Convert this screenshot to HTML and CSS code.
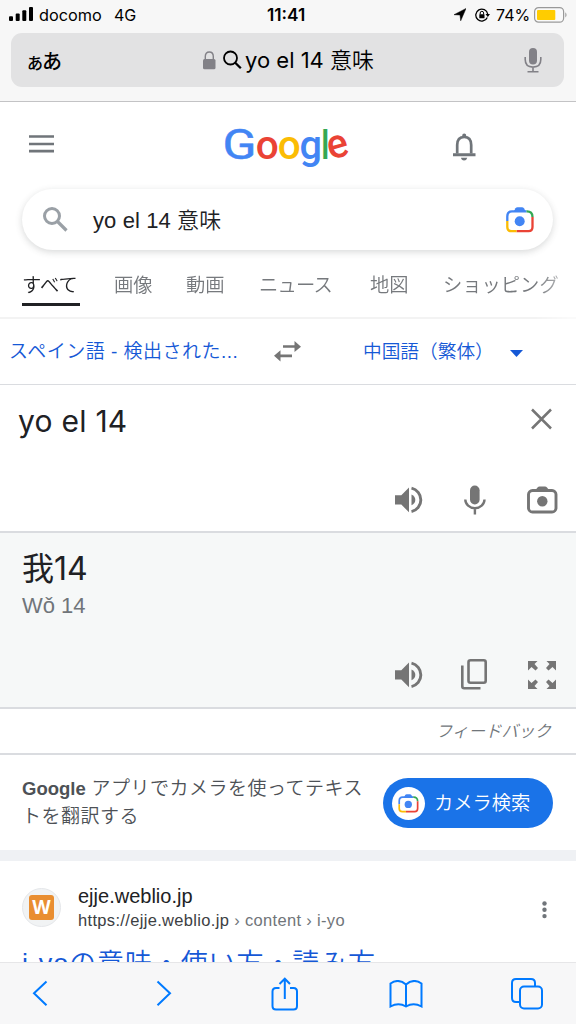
FILE: index.html
```html
<!DOCTYPE html>
<html lang="ja">
<head>
<meta charset="utf-8">
<title>yo el 14 意味</title>
<link rel="stylesheet" href="styles.css">
</head>
<body>
<svg class="defs" width="0" height="0">
  <symbol id="lens" viewBox="0 0 28 26">
    <path d="M8 4 9.500 1.200Q10.200.2 11.500 .2h4.500q1.300 0 1.900 1L19.500 4z" fill="#4285f4"/>
    <g fill="none" stroke-width="2.300">
      <path d="M1.300 14V9.500Q1.300 4.300 6 4.300H20.500" stroke="#4285f4"/>
      <path d="M20.500 4.300Q26.500 4 26.500 10" stroke="#34a853"/>
      <path d="M26.500 10V20Q26.500 24.200 22.500 24.200H10.500" stroke="#ea4335"/>
      <path d="M10.500 24.200H5.500Q1.300 24.200 1.300 20V14" stroke="#fbbc04"/>
    </g>
    <circle cx="13.700" cy="14.300" r="5" fill="#4285f4"/>
  </symbol>
  <symbol id="speaker" viewBox="0 0 28 28">
    <path d="M0 9.300H6.300L14 1.500V26.300L6.300 18.500H0z" fill="currentColor"/>
    <path d="M16.500 8.600Q20.300 10.400 20.300 14T16.500 19.200z" fill="currentColor"/>
    <path d="M16.500 2.200A12 12 0 0 1 16.500 25.600" fill="none" stroke="currentColor" stroke-width="2.900"/>
  </symbol>
  <symbol id="mic" viewBox="0 0 22 30">
    <rect x="6" y=".5" width="9.600" height="19" rx="4.800" fill="currentColor"/>
    <path d="M1.300 14.500a9.600 8.700 0 0 0 19.200 0M10.900 23v6.500" fill="none" stroke="currentColor" stroke-width="2.400"/>
  </symbol>
</svg>

<header class="browser">
  <div class="status">
    <svg class="signal" width="24" height="14" viewBox="0 0 24 14"><rect y="9.300" width="4" height="4.700" rx="1"/><rect x="6.700" y="6.500" width="4" height="7.500" rx="1"/><rect x="13.300" y="3.300" width="4" height="10.700" rx="1"/><rect x="20" width="4" height="14" rx="1"/></svg>
    <span class="carrier">docomo</span><span class="network">4G</span>
    <span class="time">11:41</span>
    <svg class="arrow" width="12" height="13" viewBox="0 0 12 13"><path d="M0 6.700 12 .5 6.700 12.800 6 7z" stroke="#000" stroke-width=".5"/></svg>
    <svg class="rotation" width="15" height="14" viewBox="0 0 15 14"><path d="M12.300 9.500A6 6 0 1 1 12.700 6" fill="none" stroke="#000" stroke-width="1.300"/><path d="M10.500 6h4.500l-2.200 3z"/><rect x="4.300" y="6.200" width="5.200" height="4" rx=".5"/><path d="M5.200 6.500V5q0-1.700 1.700-1.700T8.600 5v1.500" fill="none" stroke="#000"/></svg>
    <span class="percent">74%</span>
    <svg class="battery" width="34" height="16" viewBox="0 0 34 16"><rect x=".6" y=".6" width="29" height="14.600" rx="4" fill="#f9f9f9" stroke="#999" stroke-width="1.200"/><rect x="3" y="3" width="18.300" height="10" rx="1" fill="#fc0"/><path d="M31.300 5.300Q33.800 8 31.300 10.500z" fill="#999"/></svg>
  </div>
  <div class="address">
    <span class="text-size"><small>あ</small>あ</span>
    <svg class="lock" width="13" height="19" viewBox="0 0 13 19"><rect y="8" width="12.500" height="10.300" rx="1.500" fill="#828187"/><path d="M2.300 9V5.500q0-4.500 4-4.500t4 4.500V9" fill="none" stroke="#828187" stroke-width="1.400"/></svg>
    <svg class="glass" width="19" height="20" viewBox="0 0 19 20"><circle cx="7.500" cy="8" r="6.500" fill="none" stroke="#000" stroke-width="1.800"/><path d="m12 12.500 5.800 5.800" stroke="#000" stroke-width="2.300"/></svg>
    <span class="address-text">yo el 14 <span class="kanji">意味</span></span>
    <svg class="dictate" width="18" height="26" viewBox="0 0 18 26"><rect x="5" y="1" width="8" height="16.500" rx="4" fill="#828187"/><path d="M1.200 10v2.500q0 7.600 7.800 7.600t7.800-7.600V10M9 20v4.500M3.500 24.800h11" fill="none" stroke="#828187" stroke-width="1.600"/></svg>
  </div>
</header>

<div class="masthead">
  <svg class="menu" width="25" height="18" viewBox="0 0 25 18"><path d="M0 1.500h25M0 9h25M0 16.200h25" stroke="#70757a" stroke-width="2.700"/></svg>
  <svg class="logo" width="134" height="52" viewBox="-4 0 134 52" role="img" aria-label="Google">
    <g class="wordmark">
      <text class="capital" x="-1.500" y="40.500" fill="#4285f4" textLength="34" lengthAdjust="spacingAndGlyphs">G</text>
      <text x="31.700" y="40.500" fill="#ea4335" textLength="23" lengthAdjust="spacingAndGlyphs">o</text>
      <text x="53.700" y="40.500" fill="#fbbc04" textLength="23" lengthAdjust="spacingAndGlyphs">o</text>
      <text x="75.500" y="40.500" fill="#4285f4" textLength="22.500" lengthAdjust="spacingAndGlyphs">g</text>
      <text x="97" y="40.500" fill="#34a853" textLength="8.500" lengthAdjust="spacingAndGlyphs">l</text>
      <text x="103.500" y="39.500" fill="#ea4335" textLength="21" lengthAdjust="spacingAndGlyphs" transform="rotate(-16 114 30)">e</text>
    </g>
  </svg>
  <svg class="bell" width="23" height="28" viewBox="0 0 23 28"><path d="M4.200 20.500V12Q4.200 4 11.200 4t7 8v8.500" fill="none" stroke="#70757a" stroke-width="2.700"/><path d="M0 20.300h22.500v3H0zM9.200 4V2.500a2 2 0 0 1 4 0V4zM8 24.800h6.300q-.6 2.700-3.200 2.700T8 24.800z" fill="#70757a"/></svg>
</div>

<div class="search">
  <svg class="search-icon" width="25" height="25" viewBox="0 0 25 25"><circle cx="9" cy="9" r="7.500" fill="none" stroke="#9aa0a6" stroke-width="3"/><path d="m14.500 14.500 9 9" stroke="#9aa0a6" stroke-width="3.200"/></svg>
  <span class="query">yo el 14 意味</span>
  <svg width="28" height="26"><use href="#lens"/></svg>
</div>

<nav class="tabs">
  <a class="active">すべて</a><a>画像</a><a>動画</a><a class="news">ニュース</a><a>地図</a><a>ショッピング</a>
</nav>

<div class="languages">
  <span class="from">スペイン語 - 検出された...</span>
  <svg class="swap" width="28" height="21" viewBox="0 0 28 21"><path d="M9 5.500h12M6 14.800h12" stroke="#757575" stroke-width="2.700"/><path d="M20.500 0 27 5.700 20.500 11zM6.500 9.300 0 14.800l6.500 5.700z" fill="#757575"/></svg>
  <span class="to">中国語（繁体）</span>
  <svg class="caret" width="13" height="7" viewBox="0 0 13 7"><path d="M0 0h13L6.500 7z" fill="#1558d6"/></svg>
</div>

<section class="source">
  <div class="top"><span class="source-text">yo el 14</span>
    <svg class="close" width="21" height="22" viewBox="0 0 21 22"><path d="m1 1.500 19 19M20 1.500l-19 19" stroke="#757575" stroke-width="2.500"/></svg></div>
  <div class="actions">
    <svg width="28" height="28"><use href="#speaker"/></svg>
    <svg width="22" height="30"><use href="#mic"/></svg>
    <svg width="31" height="28" viewBox="0 0 31 28"><rect x="1.500" y="4.500" width="27.500" height="21.500" rx="4" fill="none" stroke="#757575" stroke-width="2.900"/><path d="m8.500 4 2-2.500Q11.300.5 12.500.5H18q1.200 0 2 1L22 4z" fill="#757575"/><circle cx="15.300" cy="15.300" r="5.200" fill="#757575"/></svg>
  </div>
</section>

<section class="target">
  <div class="target-text">我14</div>
  <div class="reading">Wǒ 14</div>
  <div class="actions">
    <svg width="28" height="28"><use href="#speaker"/></svg>
    <svg width="26" height="31" viewBox="0 0 26 31"><rect x="7.500" y="1.300" width="17.200" height="22.400" rx="2" fill="none" stroke="#757575" stroke-width="2.600"/><path d="M1.300 6.500v20.800q0 1.900 1.900 1.900H19.500" fill="none" stroke="#757575" stroke-width="2.600"/></svg>
    <svg width="28" height="28" viewBox="0 0 28 28"><g fill="#757575"><path id="corner" d="M0 0h9.500L6.500 3l3.500 4-2.500 2.500-4-3.500L0 9.500z"/><use href="#corner" transform="matrix(-1 0 0 1 28 0)"/><use href="#corner" transform="matrix(1 0 0 -1 0 28)"/><use href="#corner" transform="rotate(180 14 14)"/></g></svg>
  </div>
</section>

<div class="feedback"><span>フィードバック</span></div>

<section class="promo">
  <p><b>Google</b> アプリでカメラを使ってテキス<br>トを翻訳する</p>
  <a class="camera"><span class="disc"><svg width="21" height="19"><use href="#lens"/></svg></span><span class="camera-text">カメラ検索</span></a>
</section>

<article class="result">
  <div class="site">
    <span class="favicon"><span>W</span></span>
    <div class="origin">
      <div class="domain">ejje.weblio.jp</div>
      <div class="url">https://ejje.weblio.jp <i>› content › i-yo</i></div>
    </div>
    <svg class="more" width="5" height="18" viewBox="0 0 5 18" fill="#70757a"><circle cx="2.500" cy="2.500" r="2.200"/><circle cx="2.500" cy="8.800" r="2.200"/><circle cx="2.500" cy="15.100" r="2.200"/></svg>
  </div>
  <h3>i-yoの意味・使い方・読み方</h3>
</article>

<footer class="toolbar">
  <svg width="16" height="27" viewBox="0 0 16 27"><path d="M14.500 1.500 2 13.300l12.500 12"/></svg>
  <svg width="16" height="27" viewBox="0 0 16 27"><path d="m1.500 1.500 12.500 11.800-12.500 12"/></svg>
  <svg width="28" height="34" viewBox="0 0 28 34"><path d="M8.500 11H5q-3.500 0-3.500 3.500V29q0 3.500 3.500 3.500h17.500q3.500 0 3.500-3.500V14.500q0-3.500-3.500-3.500H19M13.800 22V1.700M8.500 7l5.300-5.300L19 7"/></svg>
  <svg width="34" height="28" viewBox="0 0 34 28"><path d="M17 4.500Q9.500-2 1.500 3.500v23q8-4.500 15.500 0 7.500-4.500 15.500 0v-23Q24.500-2 17 4.500v22"/></svg>
  <svg width="32" height="32" viewBox="0 0 32 32"><rect x="9" y="8.500" width="22" height="22" rx="4"/><path d="M9 24H5q-4 0-4-4V5q0-4 4-4h15q4 0 4 4v3.500"/></svg>
</footer>
</body>
</html>
```

FILE: styles.css
```css
* { box-sizing: border-box; }
html, body { margin: 0; height: 1024px; overflow: hidden; }
body {
  display: flex; flex-direction: column; width: 576px; background: #fff; color: #202124;
  font-family: "Liberation Sans", "Noto Sans CJK JP", sans-serif; font-weight: 350; white-space: nowrap;
}
svg { display: block; flex: none; }
.defs { position: absolute; }
span, a { flex: none; }

.browser { height: 102px; flex: none; background: #f7f7f7; border-bottom: 1px solid #c3c3c5; padding: 0 11px; color: #000; font-family: Inter, "Noto Sans CJK JP", sans-serif; }
.status { height: 33px; display: flex; align-items: center; padding-bottom: 4px; font-size: 16px; font-weight: 400; margin: 0 -4px 0 -2px; }
.signal { margin-bottom: 1px; }
.carrier { margin-left: 6px; width: 75px; font-size: 16.300px; }
.network { width: 153px; }
.time { width: 187px; font-weight: 600; font-size: 17.300px; }
.rotation { margin-left: 9px; }
.percent { margin-left: 6px; width: 38px; }
.address { height: 54px; margin-right: 1px; border-radius: 11px; background: #e2e2e3; display: flex; align-items: center; }
.text-size { margin-left: 16px; width: 176px; font-size: 20px; font-weight: 500; letter-spacing: -1px; }
.text-size small { font-size: 16px; }
.glass { margin-left: 7px; }
.address-text { margin-left: 3px; width: 279px; font-size: 22px; line-height: 30px; font-weight: 400; }
.kanji { font-weight: 350; }

.masthead { height: 87px; flex: none; display: flex; align-items: flex-start; padding: 33px 0 0 29px; }
.logo { margin: -17px 99px 0 166px; overflow: visible; }
.wordmark { font: 500 41px Roboto, sans-serif; }
.capital { font-size: 43px; font-weight: 400; stroke: #4285f4; stroke-width: .5; }
.bell { margin-top: -2px; }
.search { height: 61px; flex: none; margin: 0 23px 0 22px; padding: 0 19px 0 21px; border-radius: 31px; box-shadow: 0 2px 7px rgba(60,64,67,.2); display: flex; align-items: center; }
.query { margin: 0 0 4px 25px; width: 413px; font-size: 22px; letter-spacing: .1px; }

.tabs { height: 69px; flex: none; display: grid; grid-template-columns: 92px 72px 73px 111px 73px auto; padding-left: 22px; border-bottom: 2px solid #f3f3f3; font-size: 19.300px; line-height: 34px; color: #76797d; padding-top: 19px; overflow: hidden; mask-image: linear-gradient(90deg, #000 535px, rgba(0,0,0,.4) 570px); }
.active { width: 58px; height: 37px; border-bottom: 3px solid #202124; color: #202124; }
.news { letter-spacing: -.8px; }

.languages { height: 66px; flex: none; display: flex; align-items: center; border-bottom: 1px solid #dadce0; color: #1558d6; font-size: 19px; padding-left: 9px; }
.from { width: 265px; letter-spacing: .5px; margin-bottom: 5px; }
.to { margin-left: 61px; width: 147px; font-size: 18.700px; margin-bottom: 5px; }
.swap { margin-bottom: 1px; }
.caret { margin-top: 4px; }

.source { height: 148px; flex: none; border-bottom: 2px solid #dadce0; padding: 14px 18px 0; color: #757575; }
.top { height: 85px; display: flex; justify-content: space-between; align-items: flex-start; padding-right: 6px; }
.close { margin-top: 9px; }
.source-text { font: 400 30px/44px Inter, sans-serif; letter-spacing: .25px; color: #202124; }
.actions { display: grid; grid-template-columns: 69px 63px auto; justify-content: start; align-items: center; padding-left: 377px; height: 31px; color: #757575; }
.target { height: 176px; flex: none; background: #f6f8f8; border-bottom: 2px solid #dadce0; padding: 13px 18px 0; }
.target-text { font: 400 32px/46px Inter, "Noto Sans CJK JP", sans-serif; padding-left: 4px; }
.reading { color: #70757a; font-size: 22px; line-height: 28px; padding-left: 4px; margin-bottom: 39px; }
.target .actions { grid-template-columns: 66px 67px auto; }
.feedback { height: 46px; flex: none; border-bottom: 2px solid #dadce0; display: flex; align-items: center; justify-content: flex-end; padding: 0 25px 3px 0; font-size: 16.500px; font-style: italic; color: #70757a; }

.promo { height: 95px; flex: none; padding: 20px 23px 0 22px; display: flex; justify-content: space-between; }
.promo p { margin: 0; font-size: 19px; line-height: 27.500px; color: #4d5156; letter-spacing: .5px; }
.promo b { font-size: 18.500px; letter-spacing: 0; font-weight: 700; }
.camera { height: 50px; width: 170px; margin-top: 3px; border-radius: 25px; background: #1a73e8; display: flex; align-items: center; padding-left: 9px; color: #fff; font-size: 19.300px; }
.disc { width: 33px; height: 33px; border-radius: 50%; background: #fff; display: flex; align-items: center; justify-content: center; }
.camera-text { margin: 0 0 2px 9px; }

.result { height: 112px; flex: none; border-top: 11px solid #eff1f4; padding: 22px 29px 0 22px; overflow: hidden; }
.site { display: flex; align-items: center; height: 48px; }
.favicon { width: 39px; height: 39px; border-radius: 50%; background: #f1f3f4; border: 1px solid #e5e7ea; display: flex; align-items: center; justify-content: center; }
.favicon span { width: 25px; height: 25px; border-radius: 3px; background: #e98e31; color: #fff; font: 700 19px/25px "Open Sans", sans-serif; text-align: center; }
.origin { margin-left: 17px; flex: 1; }
.domain { font-size: 20px; line-height: 26px; }
.url { font-size: 16.500px; line-height: 23px; color: #3c4043; letter-spacing: .33px; }
.url i { font-style: normal; color: #70757a; }
.more { margin-top: 5px; }
.result h3 { margin: 14px 0 0; font-size: 27px; line-height: 38px; font-weight: 350; color: #1558d6; letter-spacing: .9px; }

.toolbar { height: 62px; flex: none; background: #f7f7f8; border-top: 1px solid #e6e6e8; display: grid; grid-template-columns: 124px 115px 118px 122px auto; align-items: center; justify-content: start; padding-left: 32px; fill: none; stroke: #007aff; stroke-width: 2; }
```
